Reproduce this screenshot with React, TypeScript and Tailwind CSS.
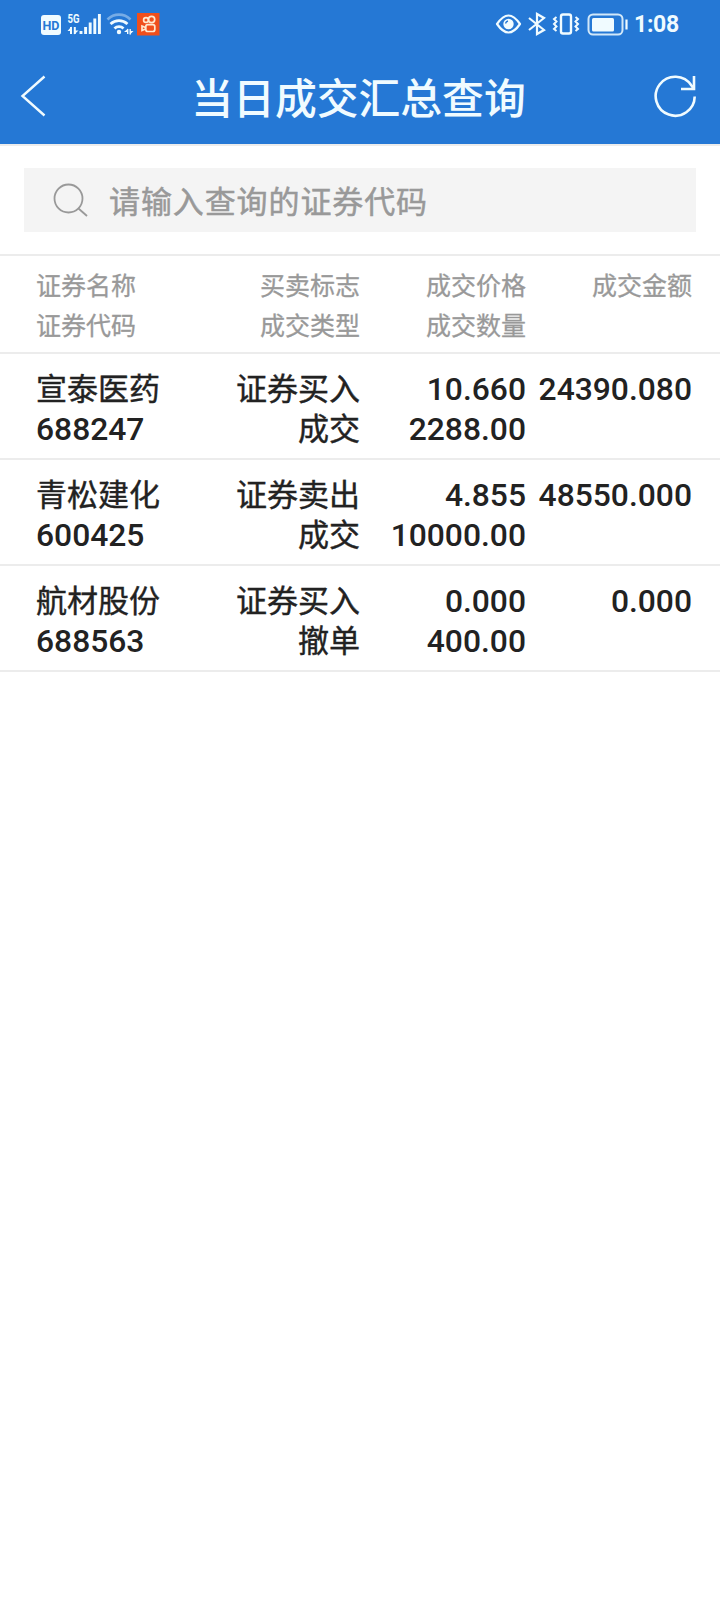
import React from "react";

const rows = [
  { name: "宣泰医药", code: "688247", side: "证券买入", type: "成交", price: "10.660", qty: "2288.00", amount: "24390.080" },
  { name: "青松建化", code: "600425", side: "证券卖出", type: "成交", price: "4.855", qty: "10000.00", amount: "48550.000" },
  { name: "航材股份", code: "688563", side: "证券买入", type: "撤单", price: "0.000", qty: "400.00", amount: "0.000" },
];

function StatusBar() {
  return (
    <div className="flex h-12 items-center justify-between pl-10 pr-10">
      <svg width="122" height="28" viewBox="40 10 122 28" fill="none" stroke="#f0fbff">
        <rect x="41" y="15" width="20" height="20" rx="3" fill="#f0fbff" stroke="none" />
        <text x="51" y="30" textAnchor="middle" fontFamily="Roboto" fontWeight="700" fontSize="13.500" textLength="17" lengthAdjust="spacingAndGlyphs" fill="#2578d5" stroke="none">HD</text>
        <text x="67.5" y="23" fontFamily="Roboto" fontWeight="700" fontSize="12.500" textLength="12" lengthAdjust="spacingAndGlyphs" fill="#f0fbff" stroke="none">5G</text>
        <path d="M71 34V27M74.800 27V34" strokeWidth="2" />
        <path d="M71.500 26.500V31H67.500ZM74.300 34.500V30.500H78.500Z" fill="#f0fbff" stroke="none" />
        <path d="M81 34V31M85.600 34V27M90.200 34V22.500M94.800 34V18.500M99.400 34V14" strokeWidth="2.900" />
        <path d="M107.500 19.500C114 13 124 13 130.500 19.500" strokeWidth="2.600" opacity=".4" />
        <path d="M110.500 24C115.500 19.500 122.500 19.500 127.500 24M114.500 28.500C117 26 121 26 123.500 28.500" strokeWidth="2.800" />
        <circle cx="119" cy="32" r="2.200" fill="#f0fbff" stroke="none" />
        <path d="M127.700 34V29M130.200 29V34.500" strokeWidth="1.400" />
        <path d="M128 28.500V32H124ZM130 34.500V31H133.500Z" fill="#f0fbff" stroke="none" />
        <rect x="137" y="13" width="22.500" height="22.500" fill="#f04f1c" stroke="none" />
        <g strokeWidth="1.700" stroke="#ffe9d0">
          <circle cx="146" cy="20" r="2.400" />
          <circle cx="151.600" cy="19.500" r="3.100" />
          <rect x="145.800" y="24.700" width="9" height="6.800" rx="2" />
          <path d="M145.500 27.500L142 26V30.500L145.500 29" />
        </g>
      </svg>
      <div className="flex items-center">
        <svg width="134" height="28" viewBox="494 10 134 28" fill="none" stroke="#f0fbff">
          <path d="M497 24C501.500 17.500 504.500 15.500 508.500 15.500S515.500 17.500 520 24C515.500 30.500 512.500 32.500 508.500 32.500S501.500 30.500 497 24Z" strokeWidth="2.200" strokeLinejoin="round" />
          <circle cx="508.500" cy="24" r="5.200" fill="#f0fbff" stroke="none" />
          <path d="M505.500 23.500Q506 21.500 508 21" stroke="#2578d5" strokeWidth="1.300" />
          <path d="M529 18L544 30L537 34V14L544 18L529 30" strokeWidth="2.200" />
          <rect x="561" y="14.500" width="10" height="19" rx="2" strokeWidth="2.400" />
          <path d="M556.500 17L554 19L556.500 21.500L554 24L556.500 26.500L554 29L556.500 31M575.500 17L578 19L575.500 21.500L578 24L575.500 26.500L578 29L575.500 31" strokeWidth="2" />
          <rect x="588.500" y="14.500" width="34" height="20" rx="4.500" strokeWidth="2" opacity=".85" />
          <rect x="592" y="18" width="22" height="13.500" rx="1.500" fill="#f0fbff" stroke="none" />
          <path d="M626.500 19.500V29.500" strokeWidth="2.200" />
        </svg>
        <span className="w-[52px] pt-0.5 pl-[6px] text-[23px] leading-7 font-bold tracking-[-0.3px]">1:08</span>
      </div>
    </div>
  );
}

function TitleBar() {
  return (
    <div className="flex h-24 items-center justify-between pl-5 pr-[22px]">
      <svg width="28" height="42" viewBox="0 0 28 42" fill="none" stroke="#f0fbff" strokeWidth="2.400">
        <path d="M24.500 1.500L2.500 21L24.500 40.500" />
      </svg>
      <h1 className="pt-2 pl-[15px] text-[41.800px] leading-[60px] font-medium">当日成交汇总查询</h1>
      <svg width="44" height="44" viewBox="0 0 44 44" fill="none" stroke="#f0fbff" strokeWidth="2.600">
        <path d="M40.700 22.500A19.500 19.500 0 1 1 37.500 11.500L40 15" />
        <path d="M40 2V15H27" />
      </svg>
    </div>
  );
}

export default function App() {
  return (
    <div className="min-h-[1600px] w-[720px] bg-white font-['Roboto','Noto_Sans_CJK_SC',sans-serif] text-[#222]">
      <header className="h-36 bg-[#2578d5] text-[#f0fbff]">
        <StatusBar />
        <TitleBar />
      </header>
      <div className="border-y-2 border-[#ececec] px-6 pt-[22px] pb-[22px]">
        <div className="flex h-16 items-center bg-[#f4f4f4] pl-[29px] text-[#999]">
          <svg width="36" height="36" viewBox="0 0 36 36" fill="none" stroke="#999" strokeWidth="1.800">
            <circle cx="15.500" cy="16.500" r="14" />
            <path d="M25.500 26.500L34 34" />
          </svg>
          <span className="ml-5 pt-[5px] text-[31px] leading-10 tracking-[0.9px] [-webkit-text-stroke:0.5px_#999]">请输入查询的证券代码</span>
        </div>
      </div>
      <div className="grid h-[98px] grid-cols-[162px_162px_166px_166px] content-start border-b-2 border-[#ececec] pt-[11px] pl-9 text-right text-[25px] leading-10 text-[#999] [-webkit-text-stroke:0.3px_#999]">
        <div className="text-left">证券名称<br />证券代码</div>
        <div>买卖标志<br />成交类型</div>
        <div>成交价格<br />成交数量</div>
        <div>成交金额</div>
      </div>
      {rows.map((r) => (
        <div key={r.code} className="grid h-[106px] grid-cols-[162px_162px_166px_166px] grid-rows-[40px_40px] content-start border-b-2 border-[#ececec] pt-[15px] pl-9 text-right text-[31.800px] leading-10 font-medium whitespace-nowrap">
          <div className="pt-px text-left text-[31px] font-normal [-webkit-text-stroke:0.4px_#222]">{r.name}</div>
          <div className="pt-px text-[31px] font-normal [-webkit-text-stroke:0.4px_#222]">{r.side}</div>
          <div>{r.price}</div>
          <div>{r.amount}</div>
          <div className="text-left">{r.code}</div>
          <div className="pt-px text-[31px] font-normal [-webkit-text-stroke:0.4px_#222]">{r.type}</div>
          <div>{r.qty}</div>
        </div>
      ))}
    </div>
  );
}
